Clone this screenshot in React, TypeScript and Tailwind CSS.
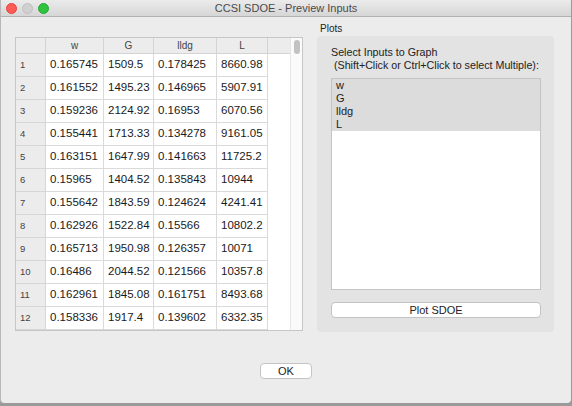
import React from 'react'

const rows: string[][] = [
  ['0.165745', '1509.5', '0.178425', '8660.98'],
  ['0.161552', '1495.23', '0.146965', '5907.91'],
  ['0.159236', '2124.92', '0.16953', '6070.56'],
  ['0.155441', '1713.33', '0.134278', '9161.05'],
  ['0.163151', '1647.99', '0.141663', '11725.2'],
  ['0.15965', '1404.52', '0.135843', '10944'],
  ['0.155642', '1843.59', '0.124624', '4241.41'],
  ['0.162926', '1522.84', '0.15566', '10802.2'],
  ['0.165713', '1950.98', '0.126357', '10071'],
  ['0.16486', '2044.52', '0.121566', '10357.8'],
  ['0.162961', '1845.08', '0.161751', '8493.68'],
  ['0.158336', '1917.4', '0.139602', '6332.35'],
]

const headers = ['w', 'G', 'lldg', 'L']
const colWidths = ['w-[58px]', 'w-[50px]', 'w-[63px]', 'w-[51px]']

export default function App() {
  return (
    <div
      className="w-[572px] h-[406px] bg-[#9a9a9a] overflow-hidden"
      style={{ fontFamily: '"Liberation Sans", Arial, sans-serif' }}
    >
      <div className="w-[571px] h-[403px] bg-[#ececec] flex flex-col rounded-b-[4px] border-l border-[#b8b8b8]">
        {/* Title bar */}
        <div className="h-[17px] shrink-0 flex items-center relative bg-gradient-to-b from-[#ebebeb] to-[#d6d6d6] border-b border-[#b1b1b1]">
          <div className="flex items-center gap-[5px] pl-[5px]">
            <span className="w-[11px] h-[11px] rounded-full bg-[#fc5b57] border border-[#e2463f]" />
            <span className="w-[11px] h-[11px] rounded-full bg-[#d0d0d0] border border-[#c0c0c0]" />
            <span className="w-[11px] h-[11px] rounded-full bg-[#30c33f] border border-[#24a732]" />
          </div>
          <div className="absolute inset-0 flex items-center justify-center text-[11px] text-[#4a4a4a]">
            CCSI SDOE - Preview Inputs
          </div>
        </div>

        {/* Body */}
        <div className="flex flex-col pt-[5px]">
          <div className="flex items-start">
            {/* Table */}
            <div className="ml-[14px] mt-[15px] w-[288px] h-[294px] border border-[#c6c6c6] bg-white flex">
              <div className="flex-1 flex flex-col">
                <div className="flex h-[16px] bg-[#ececec] border-b border-[#d4d4d4] text-[10px] text-[#444]">
                  <div className="w-[30px] border-r border-[#d4d4d4]" />
                  {headers.map((h, i) => (
                    <div
                      key={h}
                      className={`${colWidths[i]} border-r border-[#d4d4d4] flex items-center justify-center`}
                    >
                      {h}
                    </div>
                  ))}
                  <div className="flex-1" />
                </div>
                {rows.map((r, ri) => (
                  <div key={ri} className="flex h-[23px]">
                    <div className="w-[30px] bg-[#ececec] border-b border-r border-[#d6d6d6] flex items-center pl-[4px] text-[9.5px] text-[#444]">
                      {ri + 1}
                    </div>
                    {r.map((c, ci) => (
                      <div
                        key={ci}
                        className={`${colWidths[ci]} border-b border-r border-[#dadada] flex items-center pl-[4px] text-[11.5px] text-[#1a1a1a]`}
                      >
                        {c}
                      </div>
                    ))}
                    <div className="flex-1" />
                  </div>
                ))}
              </div>
              {/* Scrollbar */}
              <div className="w-[12px] bg-[#fafafa] border-l border-[#e6e6e6] flex justify-center pt-[2px]">
                <div className="w-[6px] h-[14px] rounded-full bg-[#c2c2c2]" />
              </div>
            </div>

            {/* Plots */}
            <div className="ml-[14px] flex flex-col">
              <div className="h-[14px] pl-[3px] text-[10px] text-[#222] leading-[14px]">Plots</div>
              <div className="w-[237px] h-[296px] bg-[#e3e3e3] rounded-[4px] pt-[10px] pl-[14px] pr-[13px] flex flex-col">
                <div className="text-[10.7px] leading-[13px] text-[#222] whitespace-pre">
                  {'Select Inputs to Graph\n (Shift+Click or Ctrl+Click to select Multiple):'}
                </div>
                <div className="mt-[6px] h-[212px] bg-white border border-[#c4c4c4] flex flex-col">
                  {headers.map((h) => (
                    <div key={h} className="h-[13px] bg-[#dcdcdc] pl-[4px] text-[11px] leading-[13px] text-[#222]">
                      {h}
                    </div>
                  ))}
                </div>
                <button className="mt-[12px] h-[16px] bg-white border border-[#c2c2c2] rounded-[4px] text-[11px] text-[#222] leading-none">
                  Plot SDOE
                </button>
              </div>
            </div>
          </div>

          <div className="flex justify-center mt-[31px]">
            <button className="w-[52px] h-[16px] bg-white border border-[#c4c4c4] rounded-[4px] text-[11px] text-[#222] leading-none">
              OK
            </button>
          </div>
        </div>
      </div>
    </div>
  )
}
